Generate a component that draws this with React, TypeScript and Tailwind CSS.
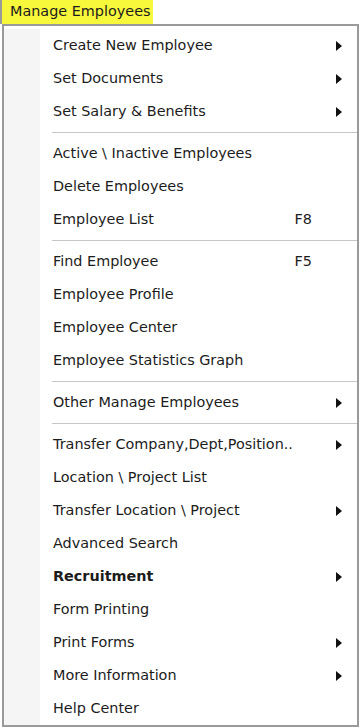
import React from "react";

type Item =
  | { kind: "item"; label: string; sub?: boolean; key?: string; bold?: boolean }
  | { kind: "sep" };

const items: Item[] = [
  { kind: "item", label: "Create New Employee", sub: true },
  { kind: "item", label: "Set Documents", sub: true },
  { kind: "item", label: "Set Salary & Benefits", sub: true },
  { kind: "sep" },
  { kind: "item", label: "Active \\ Inactive Employees" },
  { kind: "item", label: "Delete Employees" },
  { kind: "item", label: "Employee List", key: "F8" },
  { kind: "sep" },
  { kind: "item", label: "Find Employee", key: "F5" },
  { kind: "item", label: "Employee Profile" },
  { kind: "item", label: "Employee Center" },
  { kind: "item", label: "Employee Statistics Graph" },
  { kind: "sep" },
  { kind: "item", label: "Other Manage Employees", sub: true },
  { kind: "sep" },
  { kind: "item", label: "Transfer Company,Dept,Position..", sub: true },
  { kind: "item", label: "Location \\ Project List" },
  { kind: "item", label: "Transfer Location \\ Project", sub: true },
  { kind: "item", label: "Advanced Search" },
  { kind: "item", label: "Recruitment", sub: true, bold: true },
  { kind: "item", label: "Form Printing" },
  { kind: "item", label: "Print Forms", sub: true },
  { kind: "item", label: "More Information", sub: true },
  { kind: "item", label: "Help Center" },
];

function Arrow() {
  return (
    <svg width="6" height="10" viewBox="0 0 6 10" className="shrink-0">
      <path d="M0 0 L6 5 L0 10 Z" fill="#111" />
    </svg>
  );
}

export default function App() {
  return (
    <div
      className="relative h-[727px] w-[360px] overflow-hidden bg-white text-[14.4px] text-[#1c1c1c]"
      style={{ fontFamily: "Tahoma, 'DejaVu Sans', sans-serif" }}
    >
      {/* tab */}
      <div className="flex h-[24px] w-[153px] items-center whitespace-nowrap border-l-2 border-[#9a9a9a] bg-[#f7f73c] pl-[8px]">
        Manage Employees
      </div>
      {/* menu */}
      <div className="ml-[2px] mr-[1px] border-2 border-[#9a9a9a] bg-white pt-[3px]">
        <div className="flex">
          <div className="w-[36px] shrink-0 bg-[#f5f5f5]" />
          <div className="flex-1 pl-[12px]">
            {items.map((it, i) =>
              it.kind === "sep" ? (
                <div key={i} className="flex h-[9px] flex-col justify-center">
                  <div className="h-px bg-[#c6c6c6]" />
                  <div className="h-px bg-white" />
                </div>
              ) : (
                <div key={i} className="flex h-[33px] items-center whitespace-nowrap pl-[1px] pr-[15px]">
                  <span className={it.bold ? "font-bold" : ""}>{it.label}</span>
                  <span className="flex-1" />
                  {it.key && <span className="mr-[30px]">{it.key}</span>}
                  {it.sub && <Arrow />}
                </div>
              ),
            )}
          </div>
        </div>
      </div>
    </div>
  );
}
